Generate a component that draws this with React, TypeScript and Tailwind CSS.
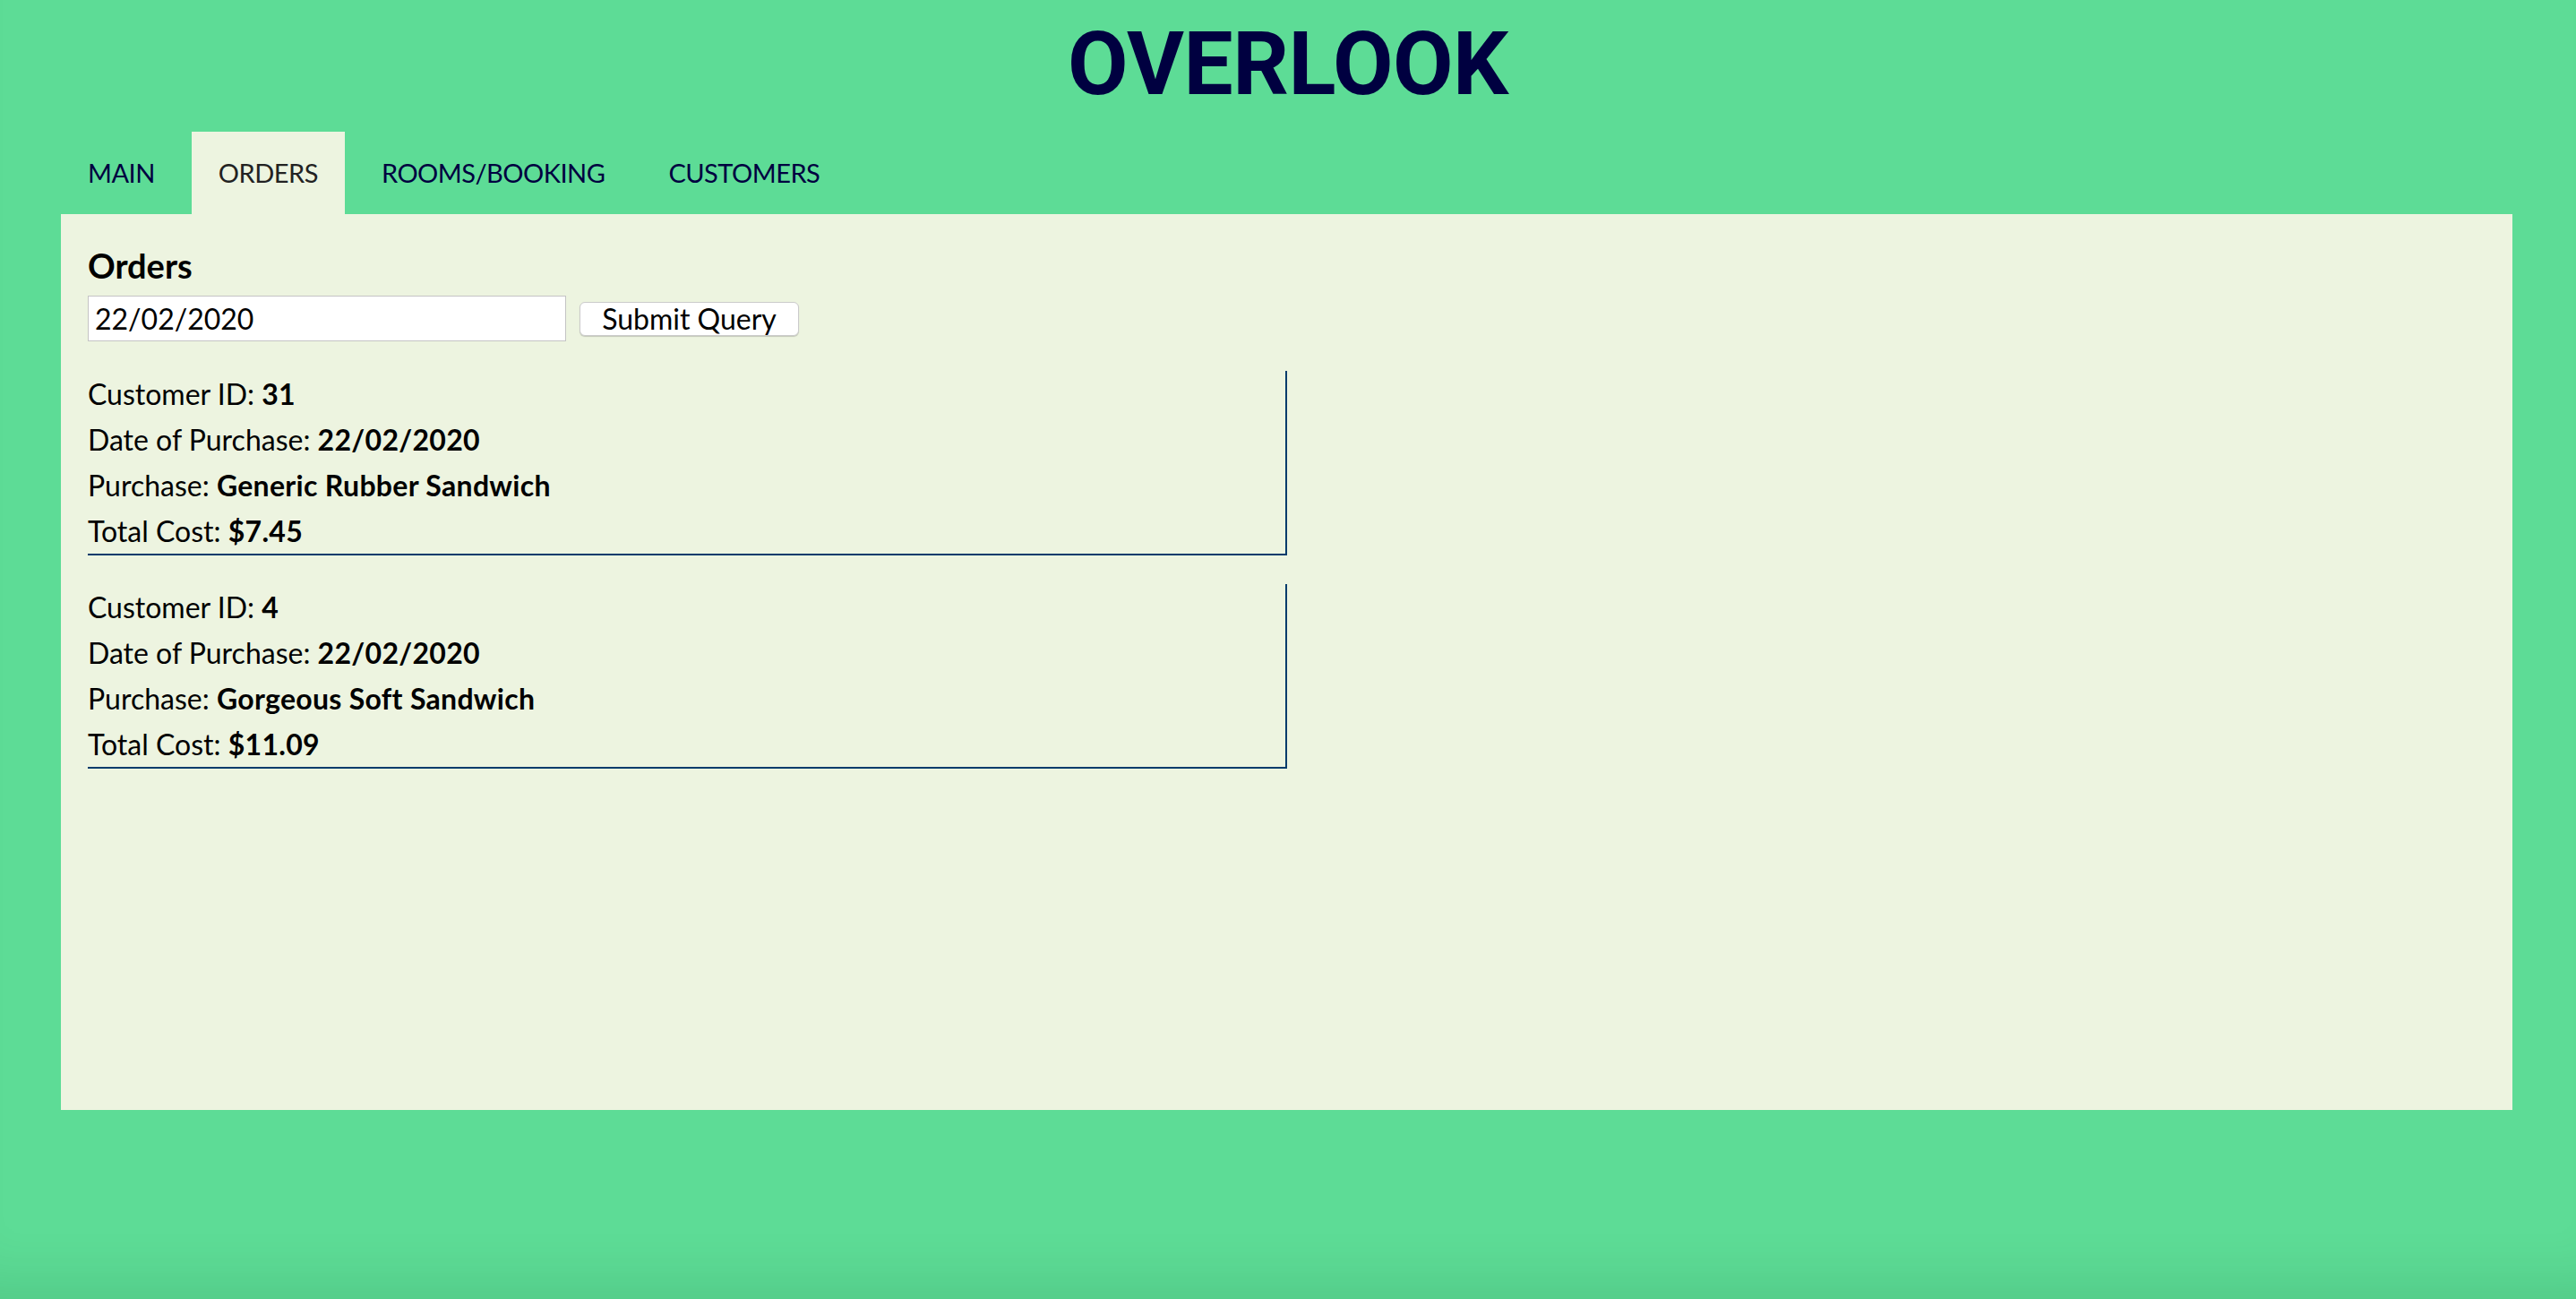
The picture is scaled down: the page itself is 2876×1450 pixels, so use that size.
import React from 'react'

const orders = [
  { id: 31, date: '22/02/2020', item: 'Generic Rubber Sandwich', cost: '$7.45' },
  { id: 4, date: '22/02/2020', item: 'Gorgeous Soft Sandwich', cost: '$11.09' },
]

const tabs = ['MAIN', 'ORDERS', 'ROOMS/BOOKING', 'CUSTOMERS']

export default function App() {
  return (
    <div className="min-h-[1450px] bg-[#5ddc96] font-['Lato',sans-serif] text-black shadow-[inset_0_-70px_60px_-50px_rgba(0,70,30,0.12)]">
      <header className="pt-[22px] text-center">
        <h1 className="font-['Roboto',sans-serif] text-[98px] leading-[100px] font-bold tracking-[-0.5px] text-[#000040]">
          OVERLOOK
        </h1>
      </header>

      <nav className="mt-[25px] ml-[68px] flex gap-[11px] text-[29px] leading-[38px] tracking-[-0.5px]">
        {tabs.map((t) => (
          <div
            key={t}
            className={
              t === 'ORDERS'
                ? 'h-[92px] px-[30px] flex items-center bg-[#edf4e0] text-[#222222]'
                : 'h-[92px] px-[30px] flex items-center text-[#000040]'
            }
          >
            {t}
          </div>
        ))}
      </nav>

      <main className="ml-[68px] mr-[71px] h-[1000px] bg-[#edf4e0] px-[30px] pt-[33px]">
        <h2 className="text-[38px] leading-[48px] font-bold">Orders</h2>
        <form className="mt-[10px] flex items-center gap-[15px]" onSubmit={(e) => e.preventDefault()}>
          <input
            type="text"
            defaultValue="22/02/2020"
            className="w-[534px] h-[51px] bg-white border border-[#c4c4c4] pl-[7px] text-[32px] text-black outline-none"
          />
          <button
            type="submit"
            className="w-[245px] h-[38px] bg-white border border-[#cbcbcb] rounded-[6px] shadow-[0_1px_1px_rgba(0,0,0,0.18)] text-[32px] leading-[36px] text-black"
          >
            Submit Query
          </button>
        </form>

        <div className="mt-[33px] flex flex-col gap-[32px]">
          {orders.map((o) => (
            <div key={o.id} className="w-[1339px] border-r-2 border-b-2 border-[#003b6b] text-[32px] leading-[51px]">
              <p>
                Customer ID: <strong className="tracking-[0.3px]">{o.id}</strong>
              </p>
              <p>
                Date of Purchase: <strong className="tracking-[0.3px]">{o.date}</strong>
              </p>
              <p>
                Purchase: <strong className="tracking-[0.3px]">{o.item}</strong>
              </p>
              <p>
                Total Cost: <strong className="tracking-[0.3px]">{o.cost}</strong>
              </p>
            </div>
          ))}
        </div>
      </main>
    </div>
  )
}
